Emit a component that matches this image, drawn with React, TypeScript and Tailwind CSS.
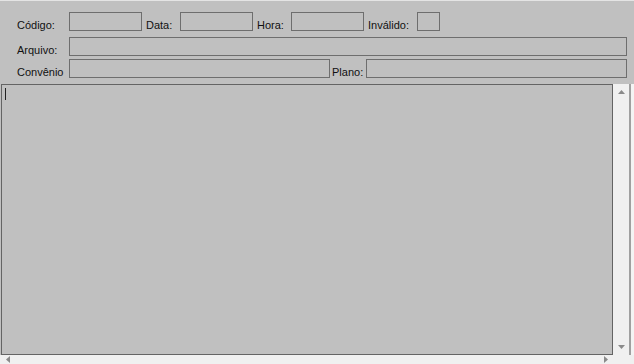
const Box = ({ w }: { w: string }) => (
    <div className={`${w} h-[19px] border border-[#6e6e6e] bg-[#c0c0c0]`} />
);

const Label = ({ w, ml, children }: { w: string; ml?: string; children: string }) => (
    <span className={`${w} ${ml ?? ""} pt-[8px] leading-none`}>{children}</span>
);

export default function App() {
    return (
        <div
            className="w-[634px] h-[364px] bg-[#c0c0c0] flex flex-col overflow-hidden border-t border-[#e4e4e4]"
            style={{ fontFamily: '"Liberation Sans", Arial, sans-serif' }}
        >
            <div className="flex flex-col pl-[17px] pr-[7px] pt-[11px] text-[11px] text-[#111]">
                <div className="flex items-center h-[19px]">
                    <Label w="w-[52px]">Código:</Label>
                    <Box w="w-[73px]" />
                    <Label w="w-[34px]" ml="ml-[4px]">Data:</Label>
                    <Box w="w-[73px]" />
                    <Label w="w-[34px]" ml="ml-[4px]">Hora:</Label>
                    <Box w="w-[73px]" />
                    <Label w="w-[49px]" ml="ml-[4px]">Inválido:</Label>
                    <Box w="w-[23px]" />
                </div>
                <div className="flex items-center h-[19px] mt-[6px]">
                    <Label w="w-[52px]">Arquivo:</Label>
                    <div className="flex-1 h-[19px] border border-[#6e6e6e]" />
                </div>
                <div className="flex items-center h-[19px] mt-[3px]">
                    <Label w="w-[52px]">Convênio</Label>
                    <Box w="w-[261px]" />
                    <Label w="w-[34px]" ml="ml-[2px]">Plano:</Label>
                    <div className="flex-1 h-[19px] border border-[#6e6e6e]" />
                </div>
            </div>
            <div className="flex mt-[6px] h-[271px] pl-[1px]">
                <div className="w-[612px] h-full border border-[#646464] bg-[#c0c0c0] pl-[3px] pt-[3px]">
                    <div className="w-[1px] h-[12px] bg-[#222]" />
                </div>
                <div className="w-[16px] h-full bg-[#f0f0f0] flex flex-col items-center justify-between py-[6px]">
                    <svg width="7" height="4" viewBox="0 0 7 4"><path d="M3.5 0 L7 4 L0 4 Z" fill="#8a8a8a" /></svg>
                    <svg width="7" height="4" viewBox="0 0 7 4"><path d="M0 0 L7 0 L3.5 4 Z" fill="#8a8a8a" /></svg>
                </div>
                <div className="w-[2px] h-full bg-[#a0a0a0]" />
                <div className="flex-1 h-full bg-[#f4f4f4]" />
            </div>
            <div className="flex-1 bg-[#f0f0f0] flex items-center justify-between pl-[6px] pr-[26px]">
                <svg width="4" height="7" viewBox="0 0 4 7"><path d="M4 0 L4 7 L0 3.5 Z" fill="#8a8a8a" /></svg>
                <svg width="4" height="7" viewBox="0 0 4 7"><path d="M0 0 L4 3.5 L0 7 Z" fill="#8a8a8a" /></svg>
            </div>
        </div>
    );
}
